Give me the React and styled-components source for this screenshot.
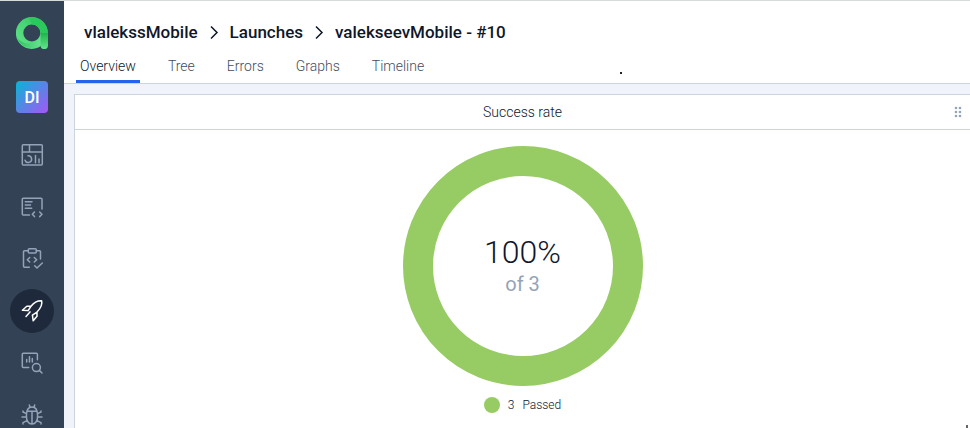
import React from "react";
import styled, { createGlobalStyle } from "styled-components";

const GlobalStyle = createGlobalStyle`
  *, *::before, *::after { box-sizing: border-box; }
  body {
    margin: 0;
    background: #f0f3f9;
    color: #0f172a;
    font-family: Roboto, "Liberation Sans", sans-serif;
  }
  a { color: inherit; text-decoration: none; }
`;

const Page = styled.div`
  display: flex;
  height: 100vh;
  overflow: hidden;
  border-top: 1px solid #d8dbdb;
`;

const Sidebar = styled.nav`
  flex: 0 0 64px;
  display: flex;
  flex-direction: column;
  align-items: center;
  background: #344256;
`;

const HomeLink = styled.a`
  display: flex;
  margin-top: 16px;
`;

const ProjectLink = styled.a`
  flex: none;
  display: grid;
  place-items: center;
  width: 32px;
  height: 32px;
  margin: 32px 0 20px;
  border-radius: 4px;
  background: linear-gradient(135deg, #06b6d4, #a855f7);
  color: #fff;
  font-size: 16px;
  font-weight: 500;
`;

const NavList = styled.div`
  display: flex;
  flex-direction: column;
  gap: 8px;
`;

const NavButton = styled.button`
  display: grid;
  place-items: center;
  width: 44px;
  height: 44px;
  padding: 0;
  border: 0;
  border-radius: 50%;
  background: ${(p) => (p.$active ? "#1e293b" : "transparent")};
  color: ${(p) => (p.$active ? "#ffffff" : "#94a3b8")};
  cursor: pointer;
`;

const Icon = styled.svg`
  display: block;
  width: 24px;
  height: 24px;
  fill: none;
  stroke: currentColor;
  stroke-width: 1.5;
  stroke-linecap: round;
  stroke-linejoin: round;
`;

const Content = styled.div`
  flex: 1;
  min-width: 0;
  display: flex;
  flex-direction: column;
`;

const Header = styled.header`
  flex: none;
  background: #fff;
  border-bottom: 1px solid #cbd5e1;
`;

const Breadcrumbs = styled.nav`
  display: flex;
  align-items: center;
  gap: 10px;
  padding: 19px 20px 0;
  font-size: 17px;
  line-height: 24px;
  font-weight: 500;
  white-space: nowrap;
`;

const Chevron = styled.svg`
  width: 12px;
  height: 16px;
  fill: none;
  stroke: #0f172a;
  stroke-width: 1.5;
`;

const TabRow = styled.div`
  display: flex;
  align-items: center;
`;

const Tabs = styled.nav`
  display: flex;
  gap: 24px;
  padding: 8px 12px 0;
`;

const Tab = styled.a`
  height: 31px;
  padding: 4px 4px 0;
  border-bottom: 3px solid ${(p) => (p.$active ? "#2563eb" : "transparent")};
  color: ${(p) => (p.$active ? "#0f172a" : "#3f4d61")};
  font-size: 14px;
  line-height: 20px;
  font-weight: 300;
`;

const Dot = styled.span`
  width: 2px;
  height: 2px;
  margin: 18px 0 0 180px;
  background: #222;
`;

const Main = styled.main`
  flex: 1;
  display: flex;
  padding: 10px 0 0 10px;
`;

const Card = styled.section`
  position: relative;
  flex: 1;
  background: #fff;
  border: solid #cbd5e1;
  border-width: 1px 0 0 1px;
`;

const CornerMark = styled.span`
  position: absolute;
  right: 2px;
  bottom: 0;
  width: 2px;
  height: 3px;
  background: #666;
`;

const CardHeader = styled.header`
  display: grid;
  grid-template-columns: 24px 1fr 24px;
  align-items: center;
  height: 35px;
  border-bottom: 1px solid #cbd5e1;
`;

const CardTitle = styled.h2`
  grid-column: 2;
  margin: 0;
  text-align: center;
  font-size: 14px;
  line-height: 20px;
  font-weight: 300;
`;

const Handle = styled.button`
  display: grid;
  place-items: center;
  padding: 0;
  border: 0;
  background: none;
  cursor: grab;
`;

const CardBody = styled.div`
  display: flex;
  flex-direction: column;
  align-items: center;
  padding-top: 16px;
`;

const Donut = styled.div`
  display: flex;
  flex-direction: column;
  align-items: center;
  justify-content: center;
  width: 240px;
  height: 240px;
  border: 30px solid #97cc64;
  border-radius: 50%;
`;

const Rate = styled.div`
  font-size: 32px;
  line-height: 36px;
  font-weight: 300;
`;

const Total = styled.div`
  color: #94a3b8;
  font-size: 20px;
  line-height: 28px;
`;

const Legend = styled.div`
  display: flex;
  align-items: center;
  gap: 8px;
  margin-top: 11px;
  font-size: 12px;
  line-height: 16px;
  font-weight: 300;
`;

const Swatch = styled.span`
  width: 16px;
  height: 16px;
  border-radius: 50%;
  background: #97cc64;
`;

const Logo = () => (
  <svg width="32" height="32" viewBox="0 0 32 32" aria-hidden="true">
    <defs>
      <linearGradient id="ring" x1="0" y1="1" x2="1" y2="0">
        <stop offset="0" stopColor="#5ee087" />
        <stop offset="0.55" stopColor="#49d475" />
        <stop offset="1" stopColor="#28c45a" />
      </linearGradient>
      <linearGradient id="arc" x1="0" y1="0" x2="1" y2="0">
        <stop offset="0" stopColor="#2fc060" />
        <stop offset="1" stopColor="#6fe796" />
      </linearGradient>
      <linearGradient id="stem" x1="0" y1="0" x2="0" y2="1">
        <stop offset="0" stopColor="#20b34c" />
        <stop offset="1" stopColor="#62e58c" />
      </linearGradient>
    </defs>
    <circle cx="15.8" cy="16" r="12.2" fill="none" stroke="url(#ring)" strokeWidth="7.4" />
    <path d="M1 20.5C6 27 14 29 22.5 22A8.8 8.8 0 0 0 24.5 17L28 25.5A15.8 15.8 0 0 1 1 20.5Z" fill="url(#arc)" />
    <path d="M24.6 16A8.8 8.8 0 0 0 15.8 7.2L13 0.5A15.8 15.8 0 0 1 31.9 16Z" fill="#2bc95d" />
    <path d="M24.5 16H32V28.4A3.7 3.7 0 0 1 24.5 28.4Z" fill="url(#stem)" />
  </svg>
);

const navItems = [
  {
    label: "Dashboards",
    icon: (
      <>
        <rect x="2.3" y="1.7" width="20" height="20.3" rx="1" />
        <path d="M2.3 9H22.3M9.5 1.7V9M8 12.7A3.4 3.4 0 1 1 5 17.2M15.5 12.5V19.7M19 16V19.7" />
      </>
    ),
  },
  {
    label: "Test cases",
    icon: (
      <path d="M9.5 20H3.3a1 1 0 0 1-1-1V4.3a1 1 0 0 1 1-1H21a1 1 0 0 1 1 1V14M5.3 6.7H12M5.3 10H10.5M5.3 13.3H11.7M14.5 17L12.3 19.3 14.5 21.6M19.7 17L22 19.3 19.7 21.6" />
    ),
  },
  {
    label: "Test plans",
    icon: (
      <>
        <rect x="8.3" y="1.8" width="8" height="4.3" rx="1" />
        <path d="M8.3 3.7H4.5a1 1 0 0 0-1 1V19.3a1 1 0 0 0 1 1H9.3M16.3 3.7H19.5a1 1 0 0 1 1 1V12M9.7 10.5L7.3 12.7 9.7 15M14.3 10.5L16.7 12.7 14.3 15M14.7 18.7L17 21 22.3 16" />
      </>
    ),
  },
  {
    label: "Launches",
    active: true,
    icon: (
      <path d="M21.6 1.8C17.3 1.6 14 3.4 11 7.3H6.8L2.4 11.2 8.1 11.6M21.6 1.8C22.8 6 20.5 9.4 17 13V17.2L13.2 21.8 12.4 16.2M8.1 11.6L10.5 8M12.4 16.2L16.6 13.4M10 12.9L6 17.4" />
    ),
  },
  {
    label: "Analytics",
    icon: (
      <>
        <path d="M8.7 16.5H3.3a1 1 0 0 1-1-1V3.3a1 1 0 0 1 1-1H16.4a1 1 0 0 1 1 1V8.8M6.7 8.4V11M9.5 5.7V11M12.3 7.6V11M19.3 19.4L22 22" />
        <circle cx="16.4" cy="16.6" r="4" />
      </>
    ),
  },
  {
    label: "Defects",
    icon: (
      <path d="M7 8.3H17M12 8.3V21M12 4C8.5 4 6.4 7 6.4 12.5S8.5 21 12 21 17.6 18 17.6 12.5 15.5 4 12 4ZM9.3 2L10 4.5M14.7 2L14 4.5M2 14H6.4M17.6 14H22M3 8V9L6.4 10.6M21 8V9L17.6 10.6M3 21V19.6L7 17.6M21 21V19.6L17 17.6" />
    ),
  },
];

const crumbs = ["vlalekssMobile", "Launches", "valekseevMobile - #10"];
const tabs = ["Overview", "Tree", "Errors", "Graphs", "Timeline"];

export default function App() {
  return (
    <>
      <GlobalStyle />
      <Page>
        <Sidebar aria-label="Main">
          <HomeLink href="#" aria-label="Home">
            <Logo />
          </HomeLink>
          <ProjectLink href="#project">DI</ProjectLink>
          <NavList>
            {navItems.map((item) => (
              <NavButton key={item.label} type="button" aria-label={item.label} $active={item.active}>
                <Icon viewBox="0 0 24 24" aria-hidden="true">{item.icon}</Icon>
              </NavButton>
            ))}
          </NavList>
        </Sidebar>
        <Content>
          <Header>
            <Breadcrumbs aria-label="Breadcrumb">
              {crumbs.map((crumb, i) => (
                <React.Fragment key={crumb}>
                  {i > 0 && (
                    <Chevron viewBox="0 0 12 16" aria-hidden="true">
                      <path d="M3 2.5L9 8.5 3 14.5" />
                    </Chevron>
                  )}
                  <a href="#crumb">{crumb}</a>
                </React.Fragment>
              ))}
            </Breadcrumbs>
            <TabRow>
              <Tabs aria-label="Launch">
                {tabs.map((tab, i) => (
                  <Tab key={tab} href={`#${tab.toLowerCase()}`} $active={i === 0}>
                    {tab}
                  </Tab>
                ))}
              </Tabs>
              <Dot />
            </TabRow>
          </Header>
          <Main>
            <Card>
              <CardHeader>
                <CardTitle>Success rate</CardTitle>
                <Handle type="button" aria-label="Move widget">
                  <svg width="8" height="12" viewBox="0 0 8 12" fill="#94a3b8" aria-hidden="true">
                    {[2, 6].map((x) =>
                      [2, 6, 10].map((y) => <circle key={`${x}-${y}`} cx={x} cy={y} r="1.3" />)
                    )}
                  </svg>
                </Handle>
              </CardHeader>
              <CardBody>
                <Donut>
                  <Rate>100%</Rate>
                  <Total>of 3</Total>
                </Donut>
                <Legend>
                  <Swatch />
                  <span>3</span>
                  <span>Passed</span>
                </Legend>
              </CardBody>
              <CornerMark />
            </Card>
          </Main>
        </Content>
      </Page>
    </>
  );
}
